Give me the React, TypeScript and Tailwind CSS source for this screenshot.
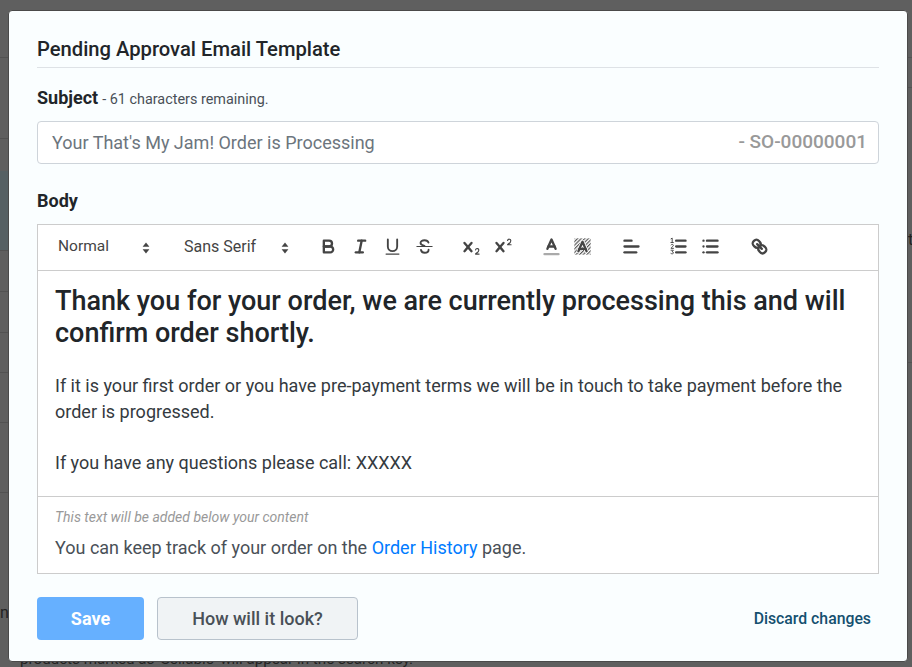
import React from "react";

const S = "#444444";
const Icon = ({ children }: { children: React.ReactNode }) => (
  <span className="flex w-8 justify-center">
    <svg viewBox="0 0 18 18" className="h-[21px] w-[21px]" fill="none" stroke={S} strokeWidth={2} strokeLinecap="round" strokeLinejoin="round">
      {children}
    </svg>
  </span>
);
const Arrows = () => (
  <svg viewBox="0 0 8 14" className="h-[14px] w-2" fill="#444444"><path d="M4 1.6 7.4 5.8H.6Z" /><path d="M4 12.4.6 8.2h6.8Z" /></svg>
);
const X = "M9.65,5.241a1,1,0,0,0-1.409.108L6,7.964,3.759,5.349A1,1,0,0,0,2.192,6.59178Q2.21541,6.6213,2.241,6.649L4.684,9.5,2.241,12.35A1,1,0,0,0,3.71,13.70722q0.02557-.02768.049-0.05722L6,11.036,8.241,13.65a1,1,0,1,0,1.567-1.24277Q9.78459,12.3783,9.759,12.35L7.316,9.5,9.759,6.651A1,1,0,0,0,9.65,5.241Z";

function Toolbar() {
  return (
    <div className="flex h-[47px] items-center border border-[#cccccc] bg-white text-[#444444]">
      <div className="flex w-[116px] items-center justify-between pl-5 pr-[4px] text-[15.5px] leading-none"><span className="-translate-y-px">Normal</span><Arrows /></div>
      <div className="ml-[8px] flex w-[127px] items-center justify-between pl-[22px] text-[16px] leading-none"><span className="-translate-y-px">Sans Serif</span><Arrows /></div>
      <div className="-mt-[2px] ml-[23px] flex items-center">
        <Icon><path d="M5,4H9.5A2.5,2.5,0,0,1,12,6.5v0A2.5,2.5,0,0,1,9.5,9H5V4Z" /><path d="M5,9h5.5A2.5,2.5,0,0,1,13,11.5v0A2.5,2.5,0,0,1,10.5,14H5V9Z" /></Icon>
        <Icon><line x1="7" x2="13" y1="4" y2="4" /><line x1="5" x2="11" y1="14" y2="14" /><line x1="8" x2="10" y1="14" y2="4" /></Icon>
        <Icon><path d="M5,3V9a4,4,0,0,0,4,4h0a4,4,0,0,0,4-4V3" strokeWidth={1.6} /><rect x="3" y="15" width="12" height="1" rx=".5" fill={S} stroke="none" /></Icon>
        <Icon><line x1="2.5" x2="15.5" y1="9" y2="9" strokeWidth={1} /><path d="M12.4 5.6C12 4.3 10.8 3.6 9 3.6 7 3.6 5.6 4.6 5.6 6 5.6 7.2 6.6 7.8 9 8.4M6 12C6.3 13.5 7.5 14.4 9.2 14.4 11.2 14.4 12.5 13.4 12.5 11.8" strokeWidth={1.6} /></Icon>
      </div>
      <div className="-mt-[2px] ml-[15px] flex items-center">
        <Icon><path d={X} fill={S} stroke="none" /><path d="M15.5,15H13.861a3.858,3.858,0,0,0,1.914-2.975,1.8,1.8,0,0,0-1.6-1.751A1.921,1.921,0,0,0,12.021,11.7a0.50013,0.50013,0,1,0,.957.291,0.914,0.914,0,0,1,1.053-.725,0.81,0.81,0,0,1,.744.762c0,1.076-1.16971,1.86982-1.93971,2.43082A1.45639,1.45639,0,0,0,12,15.5a0.5,0.5,0,0,0,.5.5h3A0.5,0.5,0,0,0,15.5,15Z" fill={S} stroke="none" /></Icon>
        <Icon><path d={X} fill={S} stroke="none" /><path d="M15.5,7H13.861a4.015,4.015,0,0,0,1.914-2.975,1.8,1.8,0,0,0-1.6-1.751A1.922,1.922,0,0,0,12.021,3.7a0.5,0.5,0,1,0,.957.291,0.917,0.917,0,0,1,1.053-.725,0.81,0.81,0,0,1,.744.762c0,1.077-1.164,1.925-1.934,2.486A1.423,1.423,0,0,0,12,7.5a0.5,0.5,0,0,0,.5.5h3A0.5,0.5,0,0,0,15.5,7Z" fill={S} stroke="none" /></Icon>
      </div>
      <div className="-mt-[2px] ml-4 flex items-center">
        <Icon><line x1="3" x2="15" y1="15.5" y2="15.5" stroke="#aaaaaa" /><polyline points="5.5 11 9 3 12.5 11" /><line x1="11.63" x2="6.38" y1="9" y2="9" /></Icon>
        <span className="-ml-[1px]">
          <Icon>
            <defs>
              <pattern id="bgp" width="2.2" height="2.2" patternUnits="userSpaceOnUse" patternTransform="rotate(-45)"><rect width="2.2" height="1" fill="#555555" stroke="none" /></pattern>
            </defs>
            <rect x="2" y="2" width="14" height="14" fill="url(#bgp)" stroke="none" />
            <polyline points="5.5 13 9 5 12.5 13" stroke="#ffffff" strokeWidth={3.2} />
            <polyline points="5.5 13 9 5 12.5 13" />
            <line x1="11.63" x2="6.38" y1="11" y2="11" />
          </Icon>
        </span>
      </div>
      <div className="-mt-[2px] ml-[17px] flex items-center">
        <Icon><line x1="3" x2="15" y1="9" y2="9" /><line x1="3" x2="13" y1="14" y2="14" /><line x1="3" x2="9" y1="4" y2="4" /></Icon>
      </div>
      <div className="-mt-[2px] ml-[15px] flex items-center">
        <Icon>
          <line x1="7" x2="15" y1="4" y2="4" /><line x1="7" x2="15" y1="9" y2="9" /><line x1="7" x2="15" y1="14" y2="14" />
          <path d="M2.6 2.4 3.6 1.8V5.6M2.5 5.6H4.6M2.6 7.6C3 7 4.6 7 4.6 8.1 4.6 9 2.6 9.8 2.6 10.6H4.7M2.6 12.2H4.6L3.5 13.6C4.6 13.6 4.8 14.2 4.6 14.8 4.4 15.4 3 15.4 2.5 15" strokeWidth={.8} />
        </Icon>
        <Icon><line x1="6" x2="15" y1="4" y2="4" /><line x1="6" x2="15" y1="9" y2="9" /><line x1="6" x2="15" y1="14" y2="14" /><line x1="3" x2="3" y1="4" y2="4" /><line x1="3" x2="3" y1="9" y2="9" /><line x1="3" x2="3" y1="14" y2="14" /></Icon>
      </div>
      <div className="-mt-[2px] ml-[17px] flex items-center">
        <Icon><line x1="7" x2="11" y1="7" y2="11" /><path d="M8.9,4.577a3.476,3.476,0,0,1,.36,4.679A3.476,3.476,0,0,1,4.577,8.9C3.185,7.5,2.035,6.4,4.217,4.217S7.5,3.185,8.9,4.577Z" /><path d="M13.423,9.1a3.476,3.476,0,0,0-4.679-.36,3.476,3.476,0,0,0,.36,4.679c1.392,1.392,2.5,2.542,4.679.36S14.815,10.5,13.423,9.1Z" /></Icon>
      </div>
    </div>
  );
}

function Backdrop() {
  return (
    <div className="flex h-[667px] justify-between overflow-hidden bg-[#5f5f5f]">
      <div className="flex w-[8px] flex-col">
        <div className="h-[58px] border-b border-[#525252]" />
        <div className="h-[81px] border-b border-[#525252]" />
        <div className="mt-[32px] h-[80px] border-b border-[#525252] bg-[#566063]" />
        <div className="h-[41px] border-b border-[#525252]" />
        <div className="h-[41px] border-b border-[#525252]" />
        <div className="h-[40px] border-b border-[#525252]" />
        <div className="h-[50px] border-b border-[#525252]" />
        <div className="h-[70px] border-b border-[#525252]" />
      </div>
      <div className="flex w-[4px] flex-col">
        <div className="h-[58px] border-b border-[#525252]" />
        <div className="h-[30px] border-b border-[#525252]" />
        <div className="mt-[274px] border-b border-[#525252]" />
      </div>
    </div>
  );
}

export default function App() {
  const font = { fontFamily: "Roboto, sans-serif" };
  return (
    <div className="relative h-[667px] w-[912px] overflow-hidden" style={font}>
      <Backdrop />
      <div className="absolute bottom-0 left-[20px] text-[15.2px] leading-[16px] text-[#222222]">products marked as 'Sellable' will appear in the search key.</div>
      <div className="absolute left-0 top-[605px] text-[16px] leading-[16px] text-[#222222]">n</div>
      <div className="absolute left-[908px] top-[232px] text-[16px] leading-[16px] text-[#222222]">t</div>
      <div className="absolute left-[8px] top-[10px] flex h-[652px] w-[900px] flex-col rounded-[4px] border border-[#4a4a4a] bg-[#fafeff] px-[28px] pt-[26px]">
        <div className="border-b border-[#dee2e6] pb-[6px] text-[20.2px] font-medium leading-[24px] text-[#212529]">Pending Approval Email Template</div>
        <div className="mt-[18px] flex items-baseline leading-[24px] text-[#212529]">
          <span className="text-[18px] font-bold">Subject</span>
          <span className="ml-1 text-[14.4px] text-[#495057]">- 61 characters remaining.</span>
        </div>
        <div className="mt-[9px] flex h-[43px] items-center justify-between rounded-[4px] border border-[#ced4da] bg-white pl-[14px] pr-[11px] text-[18px]">
          <span className="text-[#6c757d]">Your That's My Jam! Order is Processing</span>
          <span className="text-[19px] font-medium text-[#999999]">- SO-00000001</span>
        </div>
        <div className="mt-[25px] text-[18px] font-bold leading-[24px] text-[#212529]">Body</div>
        <div className="mt-[11px]"><Toolbar /></div>
        <div className="h-[225px] border-x border-[#cccccc] bg-white px-[17px] pt-[14px]">
          <h2 className="text-[27px] font-medium leading-[32px] text-[#212529]">Thank you for your order, we are currently processing this and will confirm order shortly.</h2>
          <p className="mt-[24px] text-[18px] leading-[26px] text-[#343a40]">If it is your first order or you have pre-payment terms we will be in touch to take payment before the order is progressed.</p>
          <p className="mt-[25px] text-[18px] leading-[26px] text-[#343a40]">If you have any questions please call: XXXXX</p>
        </div>
        <div className="h-[78px] border border-[#cccccc] bg-white px-[17px] pt-[10px]">
          <div className="text-[14px] italic leading-[20px] text-[#999999]">This text will be added below your content</div>
          <div className="mt-[9px] text-[18px] leading-[24px] text-[#495057]">You can keep track of your order on the <span className="text-[#007bff]">Order History</span> page.</div>
        </div>
        <div className="mt-[23px] flex items-center">
          <button className="h-[43px] w-[107px] rounded-[4px] bg-[#66b0ff] text-[18px] font-bold text-white">Save</button>
          <button className="ml-[13px] h-[43px] w-[201px] rounded-[4px] border border-[#b8c2cc] bg-[#f0f3f5] text-[18px] font-medium text-[#495057]">How will it look?</button>
          <span className="ml-auto mr-[8px] text-[15.8px] font-medium text-[#14506f]">Discard changes</span>
        </div>
      </div>
    </div>
  );
}
